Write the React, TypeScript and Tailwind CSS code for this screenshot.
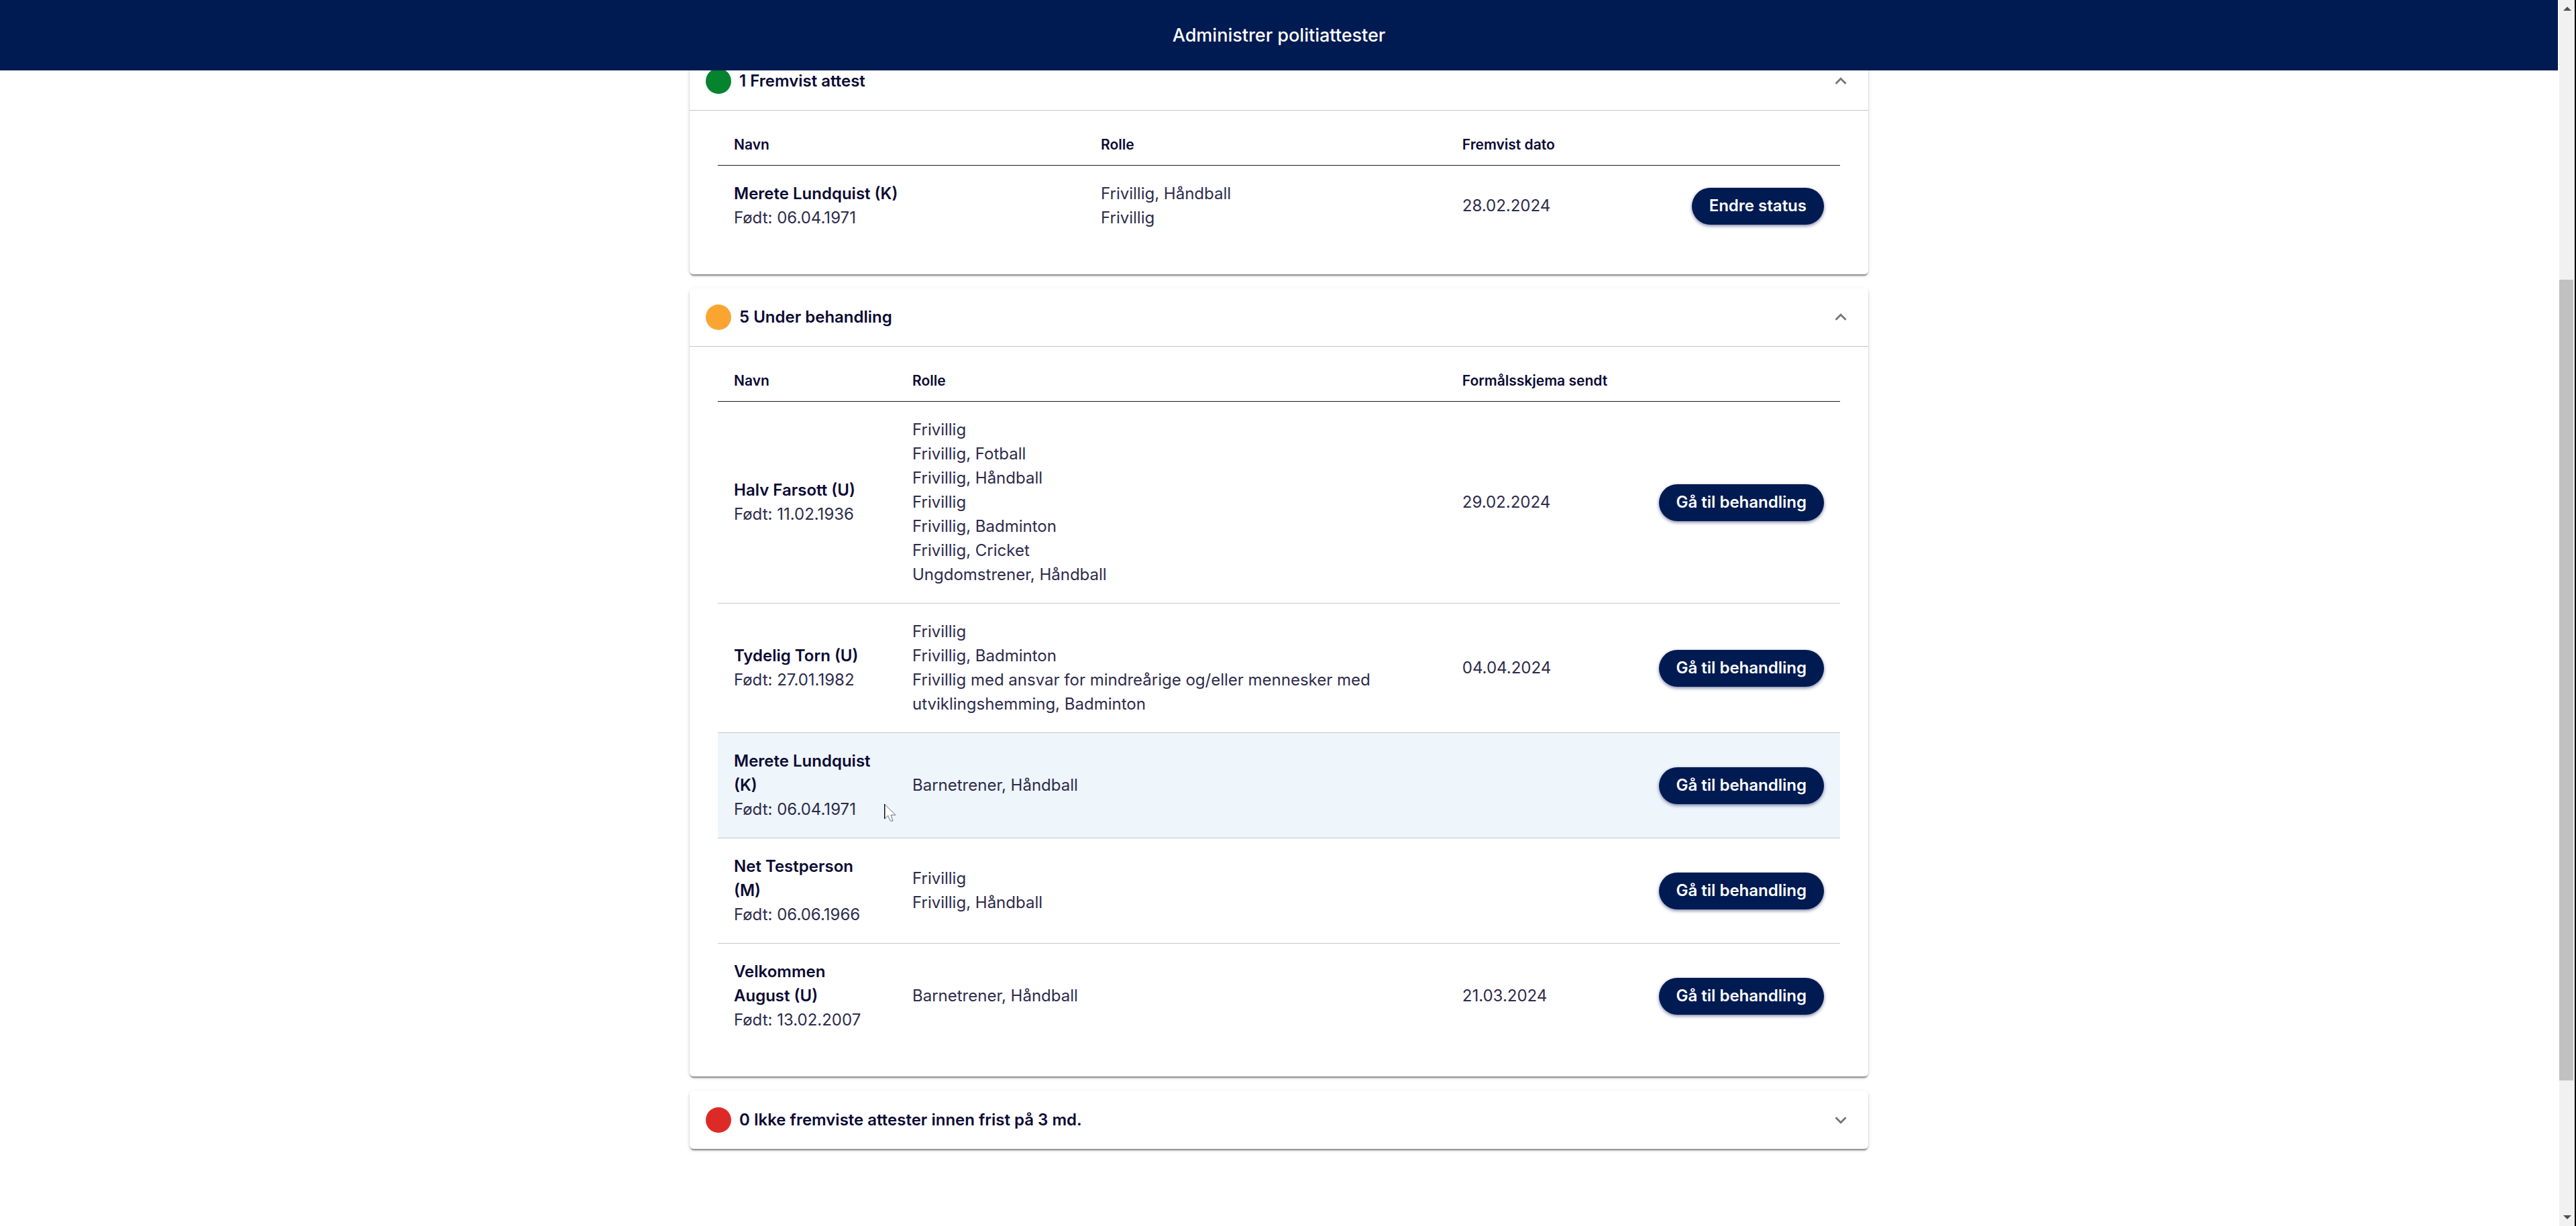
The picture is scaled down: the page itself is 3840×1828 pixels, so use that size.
import { useState } from "react";

type Person = {
  name: string;
  born: string;
  roles: string[];
  date?: string;
  active?: boolean;
};

const presented: Person[] = [
  {
    name: "Merete Lundquist (K)",
    born: "06.04.1971",
    roles: ["Frivillig, Håndball", "Frivillig"],
    date: "28.02.2024",
  },
];

const pending: Person[] = [
  {
    name: "Halv Farsott (U)",
    born: "11.02.1936",
    roles: [
      "Frivillig",
      "Frivillig, Fotball",
      "Frivillig, Håndball",
      "Frivillig",
      "Frivillig, Badminton",
      "Frivillig, Cricket",
      "Ungdomstrener, Håndball",
    ],
    date: "29.02.2024",
  },
  {
    name: "Tydelig Torn (U)",
    born: "27.01.1982",
    roles: [
      "Frivillig",
      "Frivillig, Badminton",
      "Frivillig med ansvar for mindreårige og/eller mennesker med utviklingshemming, Badminton",
    ],
    date: "04.04.2024",
  },
  {
    name: "Merete Lundquist (K)",
    born: "06.04.1971",
    roles: ["Barnetrener, Håndball"],
    active: true,
  },
  {
    name: "Net Testperson (M)",
    born: "06.06.1966",
    roles: ["Frivillig", "Frivillig, Håndball"],
  },
  {
    name: "Velkommen August (U)",
    born: "13.02.2007",
    roles: ["Barnetrener, Håndball"],
    date: "21.03.2024",
  },
];

function Chevron({ open }: { open: boolean }) {
  return (
    <svg viewBox="0 0 24 24" className="size-[34px] fill-[#757575]" aria-hidden="true">
      {open ? (
        <path d="M12 8l-6 6 1.41 1.41L12 10.83l4.59 4.58L18 14z" />
      ) : (
        <path d="M16.59 8.59L12 13.17 7.41 8.59 6 10l6 6 6-6z" />
      )}
    </svg>
  );
}

function Cursor() {
  return (
    <svg
      viewBox="0 0 18 27"
      className="absolute right-0 bottom-6 h-[27px] w-[18px]"
      aria-hidden="true"
    >
      <path
        d="M0.7 1.2V22.8L5.6 18.2L9.4 26H13L10.2 17.2H17Z"
        fill="#fff"
        stroke="#6b6b78"
        strokeWidth="1"
      />
      <path d="M0.7 1V22.8" stroke="#000" strokeWidth="1.3" />
    </svg>
  );
}

function PeopleTable({
  people,
  columns,
  dateLabel,
  action,
}: {
  people: Person[];
  columns: string[];
  dateLabel: string;
  action: string;
}) {
  return (
    <div className="px-[42px] pt-[21px] pb-[42px]">
      <table className="w-full table-fixed border-collapse text-left">
        <colgroup>
          {columns.map((c, i) => (
            <col key={i} className={c} />
          ))}
        </colgroup>
        <thead>
          <tr className="border-b border-[#1c1c22] text-[21px] leading-8">
            <th scope="col" className="px-6 py-[14px] font-semibold">Navn</th>
            <th scope="col" className="px-6 py-[14px] font-semibold">Rolle</th>
            <th scope="col" className="px-6 py-[14px] font-semibold">{dateLabel}</th>
            <td className="px-6 py-[14px]" />
          </tr>
        </thead>
        <tbody>
          {people.map((p) => (
            <tr
              key={p.name}
              className={
                p.active
                  ? "border-b border-[#c3c7cc] bg-[#eef5fb] last:border-b-0"
                  : "border-b border-[#c3c7cc] last:border-b-0"
              }
            >
              <td className="relative px-6 py-6">
                <div className="font-semibold">{p.name}</div>
                <div className="text-[#2d2b4b]">Født: {p.born}</div>
                {p.active && <Cursor />}
              </td>
              <td className="px-6 py-6 text-[#2d2b4b]">
                {p.roles.map((r, i) => (
                  <div key={i}>{r}</div>
                ))}
              </td>
              <td className="px-6 py-6 text-[#2d2b4b]">{p.date}</td>
              <td className="px-6 text-right">
                <button
                  type="button"
                  className="h-[55px] rounded-full bg-[#001a52] px-[26px] font-semibold whitespace-nowrap text-white shadow-[0_2px_5px_rgba(0,10,80,0.5)]"
                >
                  {action}
                </button>
              </td>
            </tr>
          ))}
        </tbody>
      </table>
    </div>
  );
}

function Section({
  dot,
  title,
  initiallyOpen,
  children,
}: {
  dot: string;
  title: string;
  initiallyOpen?: boolean;
  children?: React.ReactNode;
}) {
  const [open, setOpen] = useState(!!initiallyOpen);
  return (
    <section className="rounded-md bg-white shadow-[0_4px_2px_-2px_rgba(0,0,0,0.3),0_2px_3px_rgba(0,0,0,0.2),0_2px_6px_rgba(0,0,0,0.1)]">
      <h2>
        <button
          type="button"
          aria-expanded={open}
          onClick={() => setOpen(!open)}
          className={
            open
              ? "flex h-[87px] w-full items-center gap-3 border-b border-[#c3c5c8] px-6 font-semibold"
              : "flex h-[87px] w-full items-center gap-3 px-6 font-semibold"
          }
        >
          <span className={dot} />
          <span className="grow text-left">{title}</span>
          <Chevron open={open} />
        </button>
      </h2>
      {open && children}
    </section>
  );
}

function Scrollbar() {
  return (
    <div className="sticky top-0 flex h-screen w-[27px] shrink-0 border-r-2 border-black bg-white pl-[2px]" aria-hidden="true">
      <div className="flex grow flex-col items-center bg-[#f1f1f1] py-[10px]">
        <svg viewBox="0 0 12 6" className="h-[6px] w-3 fill-[#505050]">
          <path d="M6 0L12 6H0z" />
        </svg>
        <div className="grow-[401]" />
        <div className="w-[21px] grow-[1194] self-start bg-[#c1c1c1]" />
        <div className="grow-[201]" />
        <svg viewBox="0 0 12 6" className="h-[6px] w-3 fill-[#505050]">
          <path d="M0 0H12L6 6z" />
        </svg>
      </div>
    </div>
  );
}

export default function App() {
  return (
    <div className="flex min-h-screen bg-white font-['Inter',sans-serif] text-[24px] leading-9 text-[#0b0a33]">
      <div className="min-w-0 grow">
        <header className="relative z-10 flex h-[105px] items-center justify-center bg-[#001a52]">
          <h1 className="text-[27px] font-medium text-white">Administrer politiattester</h1>
        </header>
        <main className="mx-auto -mt-[27px] flex w-full max-w-[1757px] flex-col gap-[21px] pb-[114px]">
          <Section dot="size-[38px] rounded-full bg-[#05832f]" title="1 Fremvist attest" initiallyOpen>
            <PeopleTable
              people={presented}
              columns={["w-[32.7%]", "w-[32.2%]", "w-[15%]", "w-[20.1%]"]}
              dateLabel="Fremvist dato"
              action="Endre status"
            />
          </Section>
          <Section dot="size-[38px] rounded-full bg-[#faa532]" title="5 Under behandling" initiallyOpen>
            <PeopleTable
              people={pending}
              columns={["w-[15.9%]", "w-[49%]", "w-[17%]", "w-[18.1%]"]}
              dateLabel="Formålsskjema sendt"
              action="Gå til behandling"
            />
          </Section>
          <Section
            dot="size-[38px] rounded-full bg-[#dd2a27]"
            title="0 Ikke fremviste attester innen frist på 3 md."
          />
        </main>
      </div>
      <Scrollbar />
    </div>
  );
}
